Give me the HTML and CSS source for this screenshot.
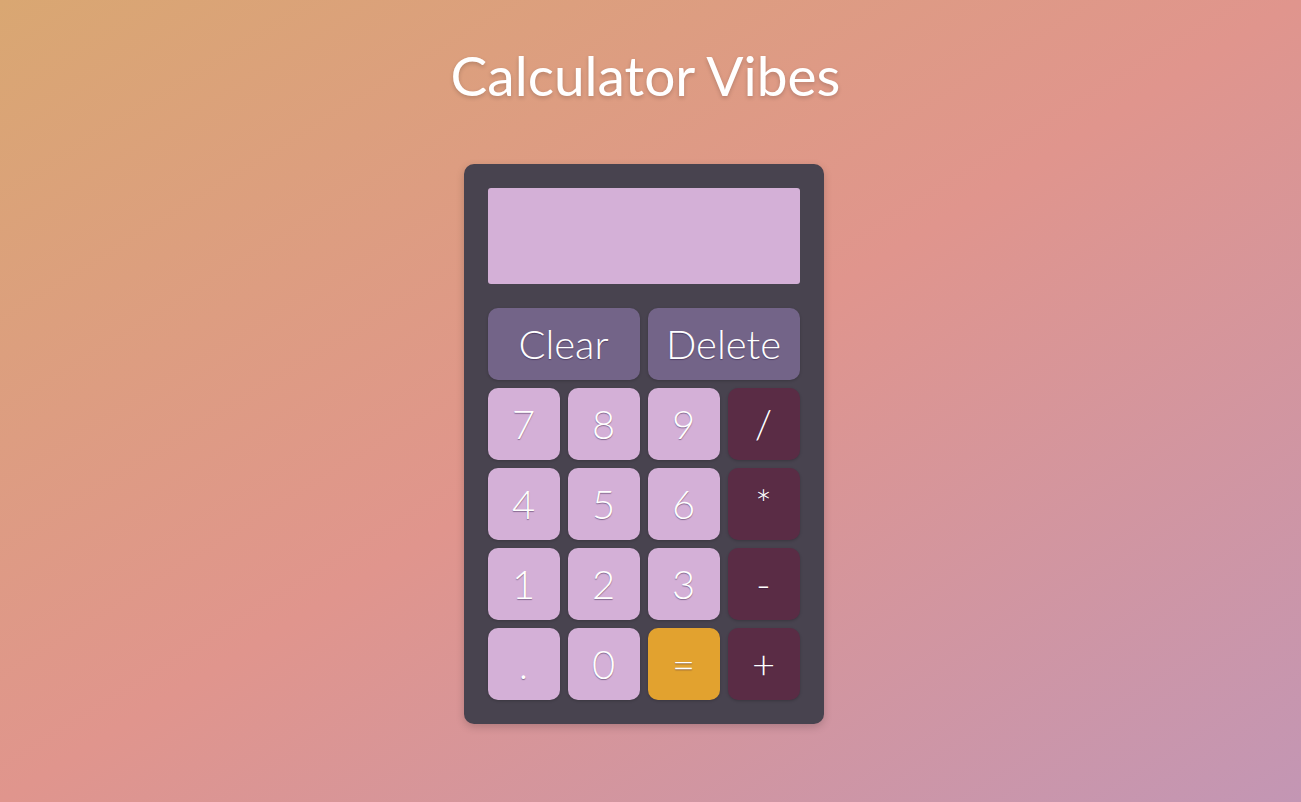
FILE: index.html
```html
<!DOCTYPE html>
<html lang="en">
<head>
<meta charset="utf-8">
<title>Calculator Vibes</title>
<link rel="stylesheet" href="styles.css">
</head>
<body>
  <h1 class="title">Calculator Vibes</h1>
  <div class="calculator">
    <div class="display"></div>
    <div class="keys">
      <button class="key key-wide key-fn">Clear</button>
      <button class="key key-wide key-fn">Delete</button>
      <button class="key key-num">7</button>
      <button class="key key-num">8</button>
      <button class="key key-num">9</button>
      <button class="key key-op">/</button>
      <button class="key key-num">4</button>
      <button class="key key-num">5</button>
      <button class="key key-num">6</button>
      <button class="key key-op">*</button>
      <button class="key key-num">1</button>
      <button class="key key-num">2</button>
      <button class="key key-num">3</button>
      <button class="key key-op">-</button>
      <button class="key key-num">.</button>
      <button class="key key-num">0</button>
      <button class="key key-eq">=</button>
      <button class="key key-op">+</button>
    </div>
  </div>
</body>
</html>
```
FILE: styles.css
```css
html, body {
  margin: 0;
  padding: 0;
  height: 100%;
}
body {
  font-family: Lato, "Liberation Sans", sans-serif;
  background: linear-gradient(to bottom right, #d9a772 0%, #e0958d 50%, #c396b4 100%);
  display: flex;
  flex-direction: column;
  align-items: center;
}
.title {
  margin: 40px 0 0;
  font-size: 55px;
  font-weight: 400;
  line-height: 70px;
  color: #ffffff;
  text-shadow: 0 2px 4px rgba(0,0,0,0.18);
  transform: translateX(-5px);
}
.calculator {
  margin-top: 54px;
  width: 312px;
  padding: 24px;
  background: #48434f;
  border-radius: 10px;
  box-shadow: 0 3px 8px rgba(0,0,0,0.18);
  transform: translateX(-7px);
}
.display {
  height: 96px;
  background: #d4b0d7;
  border-radius: 3px;
  margin-bottom: 24px;
}
.keys {
  display: grid;
  grid-template-columns: repeat(4, 72px);
  grid-auto-rows: 72px;
  gap: 8px;
}
.key {
  border: none;
  margin: 0;
  padding: 0;
  border-radius: 10px;
  font-family: Lato, "Liberation Sans", sans-serif;
  font-weight: 300;
  font-size: 40px;
  color: #ffffff;
  text-shadow: 0 1px 1px rgba(40,20,60,0.45);
  box-shadow: 0 1px 3px rgba(0,0,0,0.2);
  cursor: pointer;
}
.key-wide { grid-column: span 2; }
.key-fn { background: #736488; }
.key-num { background: #d4b0d7; }
.key-op { background: #5a2c45; }
.key-eq { background: #e2a22f; }
```
